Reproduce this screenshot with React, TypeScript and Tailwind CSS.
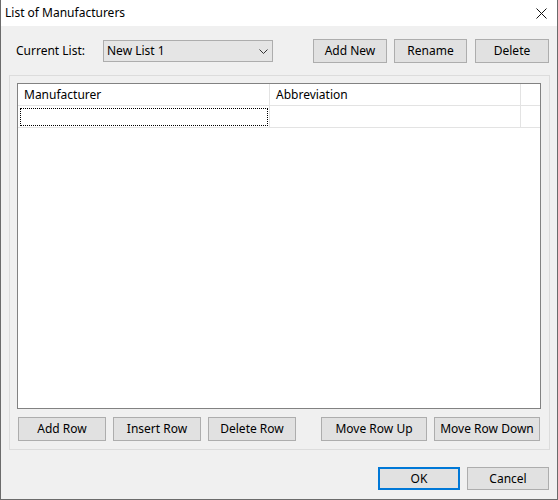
import React from "react";

function WinButton({ label, w, focused }: { label: string; w: string; focused?: boolean }) {
  return (
    <button
      type="button"
      className={`${w} h-[24px] shrink-0 bg-[#e1e1e1] text-[12px] leading-none text-black ${
        focused ? "border-2 border-[#0078d7]" : "border border-[#adadad]"
      }`}
    >
      {label}
    </button>
  );
}

export default function App() {
  return (
    <div
      className="flex h-[500px] w-[558px] flex-col border-x border-b border-[#6b6b6b] bg-[#f0f0f0] text-[12px] text-black"
      style={{ fontFamily: '"Noto Sans", "Liberation Sans", sans-serif' }}
    >
      {/* title bar */}
      <div className="flex h-[26px] shrink-0 items-center justify-between bg-white pl-[4px] pr-[10px]">
        <span className="leading-none">List of Manufacturers</span>
        <svg width="11" height="11" viewBox="0 0 11 11" className="mt-[1px]">
          <path d="M0.5 0.5 L10.5 10.5 M10.5 0.5 L0.5 10.5" stroke="#111" strokeWidth="1" />
        </svg>
      </div>

      <div className="flex flex-1 flex-col pt-[13px]">
        {/* current list row */}
        <div className="flex h-[24px] items-center pl-[15px]">
          <span className="w-[87px] shrink-0 leading-none">Current List:</span>
          <div className="flex h-[22px] w-[170px] shrink-0 items-center justify-between border border-[#adadad] bg-[#e5e5e5] pl-[3px] pr-[4px]">
            <span className="leading-none">New List 1</span>
            <svg width="9" height="5" viewBox="0 0 9 5">
              <path d="M0.5 0.5 L4.5 4.5 L8.5 0.5" fill="none" stroke="#333" strokeWidth="1" />
            </svg>
          </div>
          <div className="ml-[40px] flex gap-[7px]">
            <WinButton label="Add New" w="w-[74px]" />
            <WinButton label="Rename" w="w-[73px]" />
          </div>
          <div className="ml-[8px]">
            <WinButton label="Delete" w="w-[74px]" />
          </div>
        </div>

        {/* group box */}
        <div className="ml-[8px] mt-[12px] flex h-[375px] w-[541px] flex-col border border-[#dcdcdc] pl-[7px] pt-[7px]">
          <div className="h-[326px] w-[524px] border border-[#828282] bg-white">
            <div className="flex h-[22px] border-b border-[#e3e3e3]">
              <div className="flex w-[252px] items-center border-r border-[#e3e3e3] pl-[6px] pt-[1px] leading-none">
                Manufacturer
              </div>
              <div className="flex w-[251px] items-center border-r border-[#e3e3e3] pl-[6px] pt-[1px] leading-none">
                Abbreviation
              </div>
            </div>
            <div className="flex h-[22px] border-b border-[#e3e3e3]">
              <div className="flex w-[252px] items-center border-r border-[#e3e3e3] pl-[2px]">
                <div className="h-[18px] w-[248px] border border-dotted border-black" />
              </div>
              <div className="w-[251px] border-r border-[#e3e3e3]" />
            </div>
          </div>

          <div className="mt-[8px] flex">
            <div className="ml-[1px] flex gap-[7px]">
              <WinButton label="Add Row" w="w-[88px]" />
              <WinButton label="Insert Row" w="w-[88px]" />
              <WinButton label="Delete Row" w="w-[88px]" />
            </div>
            <div className="ml-[25px] flex gap-[7px]">
              <WinButton label="Move Row Up" w="w-[106px]" />
              <WinButton label="Move Row Down" w="w-[106px]" />
            </div>
          </div>
        </div>

        {/* dialog buttons */}
        <div className="mt-[17px] flex gap-[7px] pl-[377px]">
          <button
            type="button"
            className="h-[23px] w-[82px] border-2 border-[#0078d7] bg-[#e1e1e1] text-[12px] leading-none"
          >
            OK
          </button>
          <button
            type="button"
            className="h-[23px] w-[82px] border border-[#adadad] bg-[#e1e1e1] text-[12px] leading-none"
          >
            Cancel
          </button>
        </div>
      </div>
    </div>
  );
}
